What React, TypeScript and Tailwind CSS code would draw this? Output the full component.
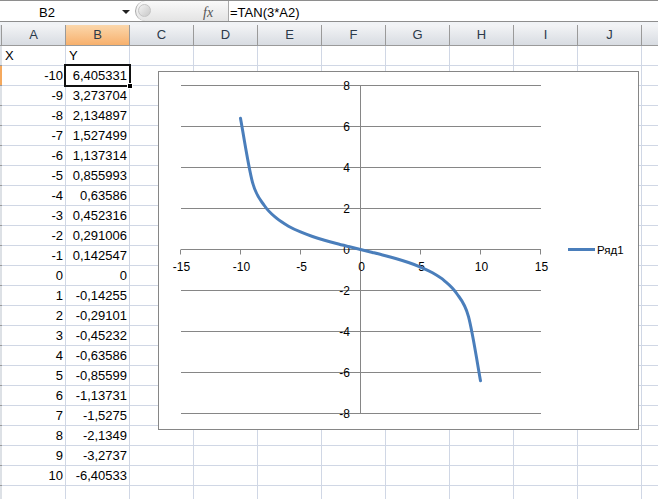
import React from "react";

const cols = ["A", "B", "C", "D", "E", "F", "G", "H", "I", "J"];

const yText = [
  "6,405331", "3,273704", "2,134897", "1,527499", "1,137314", "0,855993", "0,63586",
  "0,452316", "0,291006", "0,142547", "0", "-0,14255", "-0,29101", "-0,45232",
  "-0,63586", "-0,85599", "-1,13731", "-1,5275", "-2,1349", "-3,2737", "-6,40533",
];

const xs = Array.from({ length: 21 }, (_, i) => i - 10);

// chart mapping, page coordinates
const px = (x: number) => 360.5 + 12 * x;
const py = (y: number) => 249.5 - 20.5 * y;

function smoothPath(pts: number[][]) {
  let d = `M${pts[0][0]},${pts[0][1]}`;
  for (let i = 0; i < pts.length - 1; i++) {
    const p0 = pts[Math.max(i - 1, 0)];
    const p1 = pts[i];
    const p2 = pts[i + 1];
    const p3 = pts[Math.min(i + 2, pts.length - 1)];
    const c1x = p1[0] + (p2[0] - p0[0]) / 6;
    const c1y = p1[1] + (p2[1] - p0[1]) / 6;
    const c2x = p2[0] - (p3[0] - p1[0]) / 6;
    const c2y = p2[1] - (p3[1] - p1[1]) / 6;
    d += ` C${c1x.toFixed(2)},${c1y.toFixed(2)} ${c2x.toFixed(2)},${c2y.toFixed(2)} ${p2[0].toFixed(2)},${p2[1].toFixed(2)}`;
  }
  return d;
}

function Chart() {
  const pts = xs.map((x) => [px(x), py(Math.tan(3 * x))]);
  const yTicks = [8, 6, 4, 2, 0, -2, -4, -6, -8];
  const xTicks = [-15, -10, -5, 0, 5, 10, 15];
  return (
    <div className="absolute left-[158px] top-[71px] w-[481px] h-[359px] bg-white border border-[#868686]">
      <svg width="479" height="357" className="block">
        <g transform="translate(-159,-72)" fontFamily="'Liberation Sans', Arial, sans-serif" fontSize="12" fill="#000">
          {yTicks.map((v) => (
            <line key={v} x1="181" x2="541" y1={py(v)} y2={py(v)} stroke="#868686" strokeWidth="1" />
          ))}
          <line x1="360.5" x2="360.5" y1={py(8)} y2={py(-8)} stroke="#868686" strokeWidth="1" />
          {xTicks.map((v) => (
            <line key={v} x1={px(v)} x2={px(v)} y1="249.5" y2="254.5" stroke="#868686" strokeWidth="1" />
          ))}
          {yTicks.map((v) => (
            <text key={v} x="350" y={py(v) + 4} textAnchor="end">
              {v}
            </text>
          ))}
          {xTicks.map((v) => (
            <text key={v} x={px(v) + 1} y="271" textAnchor="middle">
              {v}
            </text>
          ))}
          <path d={smoothPath(pts)} fill="none" stroke="#4a7ebb" strokeWidth="3" strokeLinecap="round" />
          <line x1="568" x2="595" y1="249.5" y2="249.5" stroke="#4a7ebb" strokeWidth="3" />
          <text x="597" y="254" fontSize="11.5">Ряд1</text>
        </g>
      </svg>
    </div>
  );
}

function FormulaBar() {
  return (
    <div className="flex h-[22px] border-t border-b border-[#8e8e8e] bg-white">
      <div className="relative w-[135px] h-full">
        <span className="absolute left-[39px] top-[2px] text-[13px] text-black">B2</span>
        <span className="absolute left-[122px] top-[9px] w-0 h-0 border-l-[4px] border-r-[4px] border-t-[4px] border-l-transparent border-r-transparent border-t-[#222]" />
      </div>
      <div className="relative w-[94px] h-full rounded-l-full border-l border-r border-[#a9a9a9] bg-gradient-to-b from-[#fafafa] to-[#e4e4e4]">
        <span className="absolute left-[2px] top-[3px] w-[13px] h-[13px] rounded-full border border-[#c4c4c4] bg-gradient-to-br from-[#f4f4f4] to-[#c8c8c8]" />
        <span className="absolute left-[67px] top-[1px] italic text-[14px] text-[#555] font-['Liberation_Serif',serif]">fx</span>
      </div>
      <div className="pl-[1px] pt-[2px] text-[13px] text-black">=TAN(3*A2)</div>
    </div>
  );
}

function HeaderRow() {
  return (
    <div className="flex h-[21px] border-b border-[#9a9a9a]">
      <div className="w-[2px] shrink-0 border-r border-[#9a9a9a] bg-[#dde1e6]" />
      {cols.map((c) => (
        <div
          key={c}
          className={`w-[64px] shrink-0 border-r border-[#9a9a9a] flex items-center justify-center text-[13px] text-[#2c3a4a] ${
            c === "B" ? "bg-gradient-to-b from-[#fbd7ab] to-[#f7b06c]" : "bg-gradient-to-b from-[#f3f4f6] to-[#d8dce2]"
          }`}
        >
          {c}
        </div>
      ))}
      <div className="flex-1 bg-gradient-to-b from-[#f3f4f6] to-[#d8dce2]" />
    </div>
  );
}

function Row({ idx }: { idx: number }) {
  let a = "";
  let b = "";
  let left = false;
  if (idx === 0) {
    a = "X";
    b = "Y";
    left = true;
  } else if (idx <= 21) {
    a = String(xs[idx - 1]);
    b = yText[idx - 1];
  }
  return (
    <div className="flex h-[20px]">
      <div className={`w-[2px] shrink-0 border-b border-[#9a9a9a] ${idx === 1 ? "bg-[#f5a95e]" : "bg-[#dde1e6]"}`} />
      {cols.map((c) => (
        <div
          key={c}
          className={`w-[64px] shrink-0 border-r border-b border-[#d0d7e5] flex items-center text-[13px] text-black leading-none ${
            left ? "justify-start pl-[3px]" : "justify-end pr-[2px]"
          }`}
        >
          {c === "A" ? a : c === "B" ? b : ""}
        </div>
      ))}
      <div className="flex-1 border-b border-[#d0d7e5]" />
    </div>
  );
}

export default function App() {
  return (
    <div className="relative w-[658px] h-[499px] overflow-hidden bg-white font-['Liberation_Sans',Arial,sans-serif]">
      <FormulaBar />
      <div className="h-[3px] bg-[#f1f3f6]" />
      <HeaderRow />
      {Array.from({ length: 23 }, (_, i) => (
        <Row key={i} idx={i} />
      ))}
      {/* active cell B2 */}
      <div className="absolute left-[64px] top-[64px] w-[67px] h-[23px] border-2 border-[#111] pointer-events-none" />
      <div className="absolute left-[127px] top-[83px] w-[6px] h-[6px] bg-black border border-white" />
      <Chart />
    </div>
  );
}
